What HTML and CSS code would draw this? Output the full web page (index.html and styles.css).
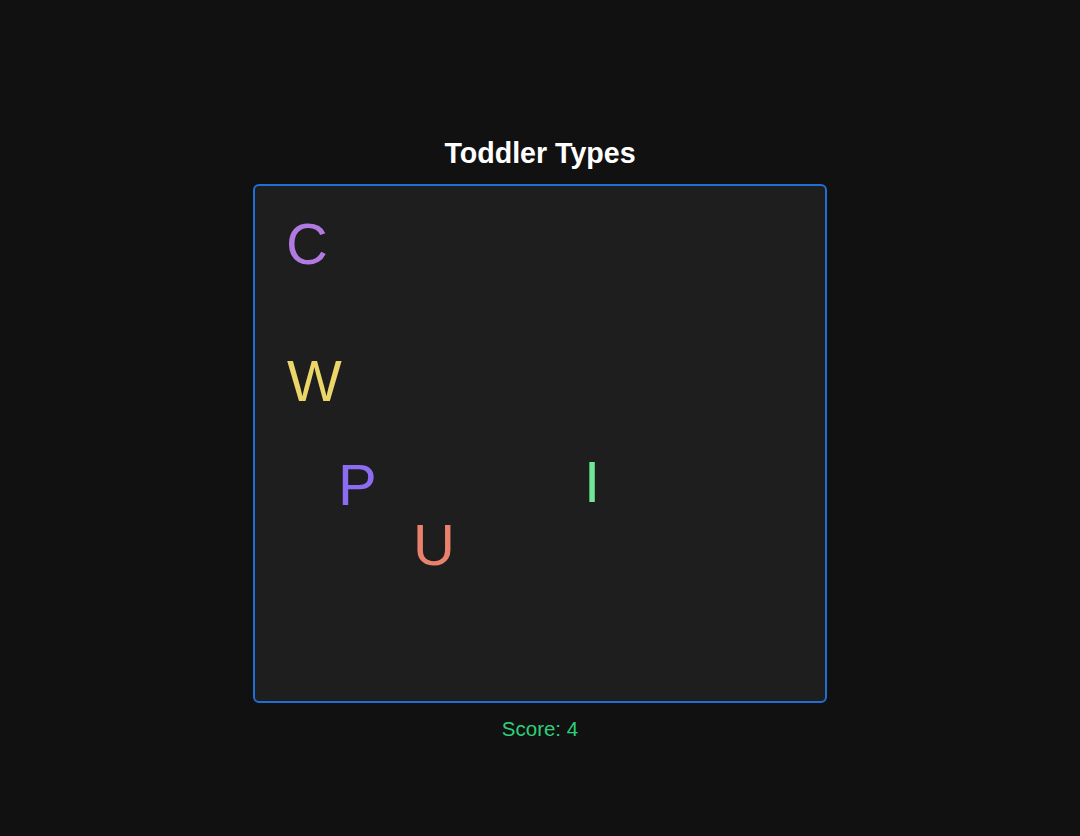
FILE: index.html
```html
<!DOCTYPE html>
<html>
<head>
<meta charset="utf-8">
<link rel="stylesheet" href="styles.css">
</head>
<body>
<main class="app">
  <h1 class="title">Toddler Types</h1>
  <div class="canvas">
    <span class="letter c-purple" style="left:31px;top:29px">C</span>
    <span class="letter c-yellow" style="left:32px;top:166px">W</span>
    <span class="letter c-violet" style="left:83px;top:270px">P</span>
    <span class="letter c-salmon" style="left:158px;top:330px">U</span>
    <span class="letter c-green" style="left:329px;top:267px">I</span>
  </div>
  <div class="score">Score: 4</div>
</main>
</body>
</html>
```

FILE: styles.css
```css
html, body {
  margin: 0;
  padding: 0;
  background: #111111;
  height: 100%;
}
body {
  font-family: "Liberation Sans", Arial, sans-serif;
  color: #ffffff;
}
.app {
  display: flex;
  flex-direction: column;
  align-items: center;
  padding-top: 134px;
}
.title {
  margin: 0;
  font-size: 28.6px;
  font-weight: bold;
  line-height: 38px;
  color: #ffffff;
}
.canvas {
  position: relative;
  margin-top: 12px;
  width: 570px;
  height: 515px;
  background: #1e1e1e;
  border: 2px solid #1f6fd6;
  border-radius: 6px;
}
.letter {
  position: absolute;
  font-size: 58px;
  line-height: 1;
}
.c-purple { color: #b07ae0; }
.c-yellow { color: #ecd66a; }
.c-violet { color: #8c6cf2; }
.c-salmon { color: #e8826c; }
.c-green  { color: #6ee898; }
.score {
  margin-top: 14px;
  font-size: 20.5px;
  line-height: 24px;
  color: #2ecf7a;
}
```
